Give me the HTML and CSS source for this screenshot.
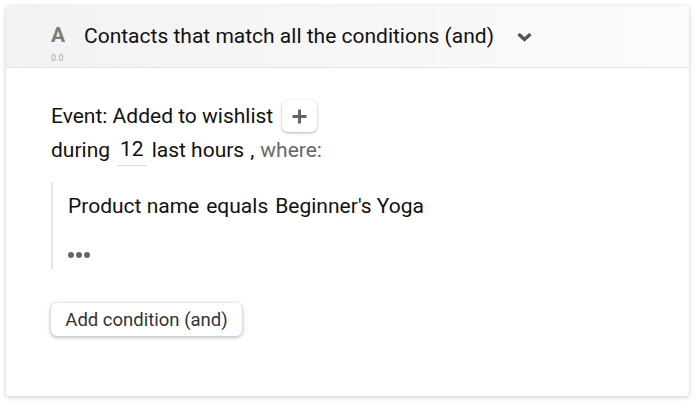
FILE: index.html
```html
<!DOCTYPE html>
<html>
<head>
<meta charset="utf-8">
<link rel="stylesheet" href="styles.css">
</head>
<body>
<div class="card">
  <div class="header">
    <div class="badge">
      <span class="letter">A</span>
      <span class="ver">0.0</span>
    </div>
    <span class="title">Contacts that match all the conditions (and)</span>
    <svg class="chev" width="15" height="10" viewBox="0 0 15 10"><path d="M1.5 2 L7.5 7.5 L13.5 2" fill="none" stroke="#555" stroke-width="3.4"/></svg>
  </div>
  <div class="body">
    <div class="line1">
      <span>Event: Added to wishlist</span>
      <button class="plus"><svg width="17" height="17" viewBox="0 0 17 17"><path d="M8.5 1.5v14M1.5 8.5h14" stroke="#666" stroke-width="3"/></svg></button>
    </div>
    <div class="line2">
      <span>during</span><span class="num">12</span><span>last hours</span><span>,</span><span class="muted">where:</span>
    </div>
    <div class="conds">
      <div class="cond"><span>Product name</span><span>equals</span><span>Beginner's Yoga</span></div>
      <div class="dots"><i></i><i></i><i></i></div>
    </div>
    <button class="add">Add condition (and)</button>
  </div>
</div>
</body>
</html>
```
FILE: styles.css
```css
html, body { margin: 0; padding: 0; background: #fff; }
body { padding: 6px 8px 9px 6px; font-family: Roboto, "Liberation Sans", sans-serif; color: #111; }
.card {
  height: 390px;
  background: #fff;
  border-radius: 3px;
  box-shadow: 0 1px 5px rgba(0,0,0,0.22);
  overflow: hidden;
  box-sizing: border-box;
}
.header {
  height: 62px;
  box-sizing: border-box;
  border-bottom: 1px solid #e4e4e4;
  background: linear-gradient(to right, #f2f2f2, #fbfbfb);
  display: flex;
  align-items: flex-start;
  padding-left: 45px;
}
.badge { display: flex; flex-direction: column; align-items: flex-start; padding-top: 17px; width: 33px; }
.letter { font-size: 21px; font-weight: 700; color: #7a7a7a; line-height: 24px; }
.ver { font-size: 9px; color: #aaa; line-height: 10px; margin-top: 6px; }
.title { font-size: 21px; line-height: 24px; padding-top: 18px; color: #111; }
.chev { margin-left: 23px; margin-top: 26px; }
.body { padding: 32px 45px 0; font-size: 21px; }
.line1 { display: flex; align-items: center; height: 32px; }
.plus {
  margin-left: 9px;
  width: 35px; height: 32px;
  border: none; background: #fff; border-radius: 6px;
  box-shadow: 0 1px 3px rgba(0,0,0,0.3);
  display: flex; align-items: center; justify-content: center; padding: 0;
}
.line2 { display: flex; gap: 6px; margin-top: 2px; line-height: 32px; }
.num { border-bottom: 1px solid #ddd; line-height: 30px; height: 32px; box-sizing: border-box; padding: 0 2px; margin-left: 2px; }
.muted { color: #666; }
.conds { border-left: 2px solid #e6e6e6; margin-top: 16px; padding-left: 15px; height: 87px; box-sizing: border-box; }
.cond { display: flex; gap: 7px; line-height: 24px; padding-top: 12px; }
.dots { display: flex; gap: 2px; margin-top: 34px; }
.dots i { width: 6px; height: 6px; border-radius: 50%; background: #666; display: block; }
.add {
  margin-top: 34px;
  width: 191px; height: 33px;
  border: none; background: #fff; border-radius: 6px;
  box-shadow: 0 1px 4px rgba(0,0,0,0.35);
  font-family: Roboto, "Liberation Sans", sans-serif;
  font-size: 18.5px; color: #333; padding: 0;
}
```
